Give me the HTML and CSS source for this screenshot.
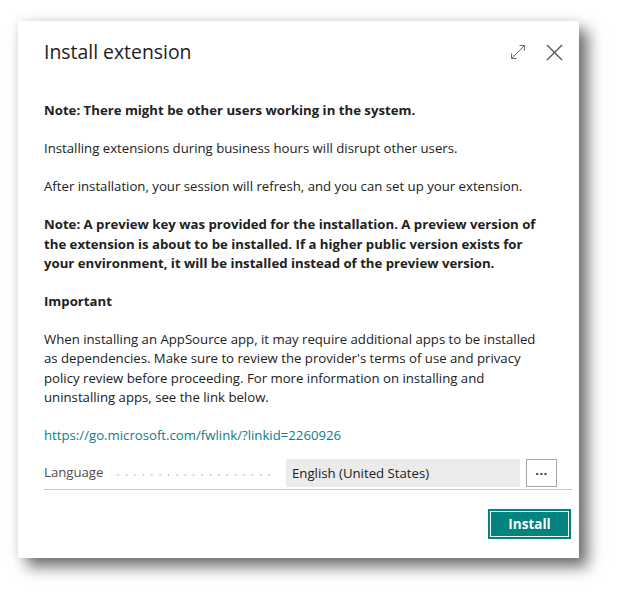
FILE: index.html
```html
<!DOCTYPE html>
<html lang="en">
<head>
<meta charset="utf-8">
<title>Install extension</title>
<link rel="stylesheet" href="styles.css">
</head>
<body>
<div class="dialog">
  <div class="header">
    <h1 class="title">Install extension</h1>
    <div class="header-icons">
      <svg class="icon" width="16" height="16" viewBox="0 0 16 16" aria-hidden="true">
        <path d="M1.5 14.5 L14.5 1.5 M9.5 1.5 H14.5 V6.5 M1.5 9.5 V14.5 H6.5" fill="none" stroke="#6a6a6a" stroke-width="1"/>
      </svg>
      <svg class="icon close" width="17" height="17" viewBox="0 0 17 17" aria-hidden="true">
        <path d="M1 1 L16 16 M16 1 L1 16" fill="none" stroke="#555" stroke-width="1.4"/>
      </svg>
    </div>
  </div>
  <div class="content">
    <p class="bold">Note: There might be other users working in the system.</p>
    <p>Installing extensions during business hours will disrupt other users.</p>
    <p>After installation, your session will refresh, and you can set up your extension.</p>
    <p class="bold">Note: A preview key was provided for the installation. A preview version of<br>the extension is about to be installed. If a higher public version exists for<br>your environment, it will be installed instead of the preview version.</p>
    <p class="bold">Important</p>
    <p>When installing an AppSource app, it may require additional apps to be installed<br>as dependencies. Make sure to review the provider's terms of use and privacy<br>policy review before proceeding. For more information on installing and<br>uninstalling apps, see the link below.</p>
    <p><a class="link" href="#">https://go.microsoft.com/fwlink/?linkid=2260926</a></p>
    <div class="field">
      <span class="field-label">Language</span>
      <span class="field-dots"></span>
      <span class="field-input">English (United States)</span>
      <button class="field-more" type="button">&middot;&middot;&middot;</button>
    </div>
  </div>
  <div class="footer">
    <button class="primary" type="button">Install</button>
  </div>
</div>
</body>
</html>
```

FILE: styles.css
```css
html, body {
  margin: 0;
  padding: 0;
  background: #ffffff;
}

body {
  font-family: "Open Sans", "Noto Sans", "Liberation Sans", sans-serif;
  color: #212121;
  min-height: 600px;
  padding-bottom: 1px;
}

.dialog {
  margin: 21px 0 0 18px;
  width: 561px;
  height: 537px;
  box-sizing: border-box;
  background: #ffffff;
  padding: 17px 7px 19px 26px;
  display: flex;
  flex-direction: column;
  box-shadow: 9px 9px 14px rgba(0, 0, 0, 0.55), 0 0 10px rgba(0, 0, 0, 0.1);
}

.header {
  display: flex;
  align-items: center;
  justify-content: space-between;
  height: 28px;
}

.title {
  margin: 0;
  font-size: 19.4px;
  font-weight: 400;
  line-height: 28px;
  color: #212121;
}

.header-icons {
  display: flex;
  align-items: center;
  gap: 20px;
  padding-right: 9px;
}

.icon {
  display: block;
}

.content {
  margin-top: 35px;
  font-size: 13.2px;
  line-height: 19.3px;
}

.content p {
  margin: 0 0 18.8px 0;
}

.content .bold {
  font-weight: 700;
}

.link {
  color: #0b7e8a;
  text-decoration: none;
}

.field {
  display: flex;
  align-items: center;
  height: 28px;
  margin-top: -5px;
  padding-bottom: 2px;
  border-bottom: 1px solid #c8c8c8;
}

.field-label {
  color: #505050;
  width: 70px;
}

.field-dots {
  flex: 0 0 160px;
  height: 2px;
  margin-top: 4px;
  background-image: radial-gradient(circle, #c4c4c4 0.9px, transparent 1.1px);
  background-size: 8.4px 2px;
  background-repeat: repeat-x;
}

.field-input {
  margin-left: 12px;
  width: 234px;
  height: 28px;
  box-sizing: border-box;
  padding-left: 6px;
  background: #ebebeb;
  line-height: 28px;
  color: #212121;
}

.field-more {
  margin-left: 6px;
  width: 31px;
  height: 28px;
  box-sizing: border-box;
  border: 1px solid #a6a6a6;
  background: #ffffff;
  font-family: inherit;
  font-size: 13px;
  font-weight: 700;
  color: #333;
  padding: 0;
  line-height: 20px;
  letter-spacing: 0.5px;
}

.footer {
  margin-top: auto;
  display: flex;
  justify-content: flex-end;
  padding-right: 1px;
}

.primary {
  width: 83px;
  height: 30px;
  box-sizing: border-box;
  background: #008381;
  border: 2px solid #008381;
  box-shadow: inset 0 0 0 1px #ffffff;
  color: #ffffff;
  font-family: inherit;
  font-size: 13.5px;
  font-weight: 700;
  padding: 0;
}
```
